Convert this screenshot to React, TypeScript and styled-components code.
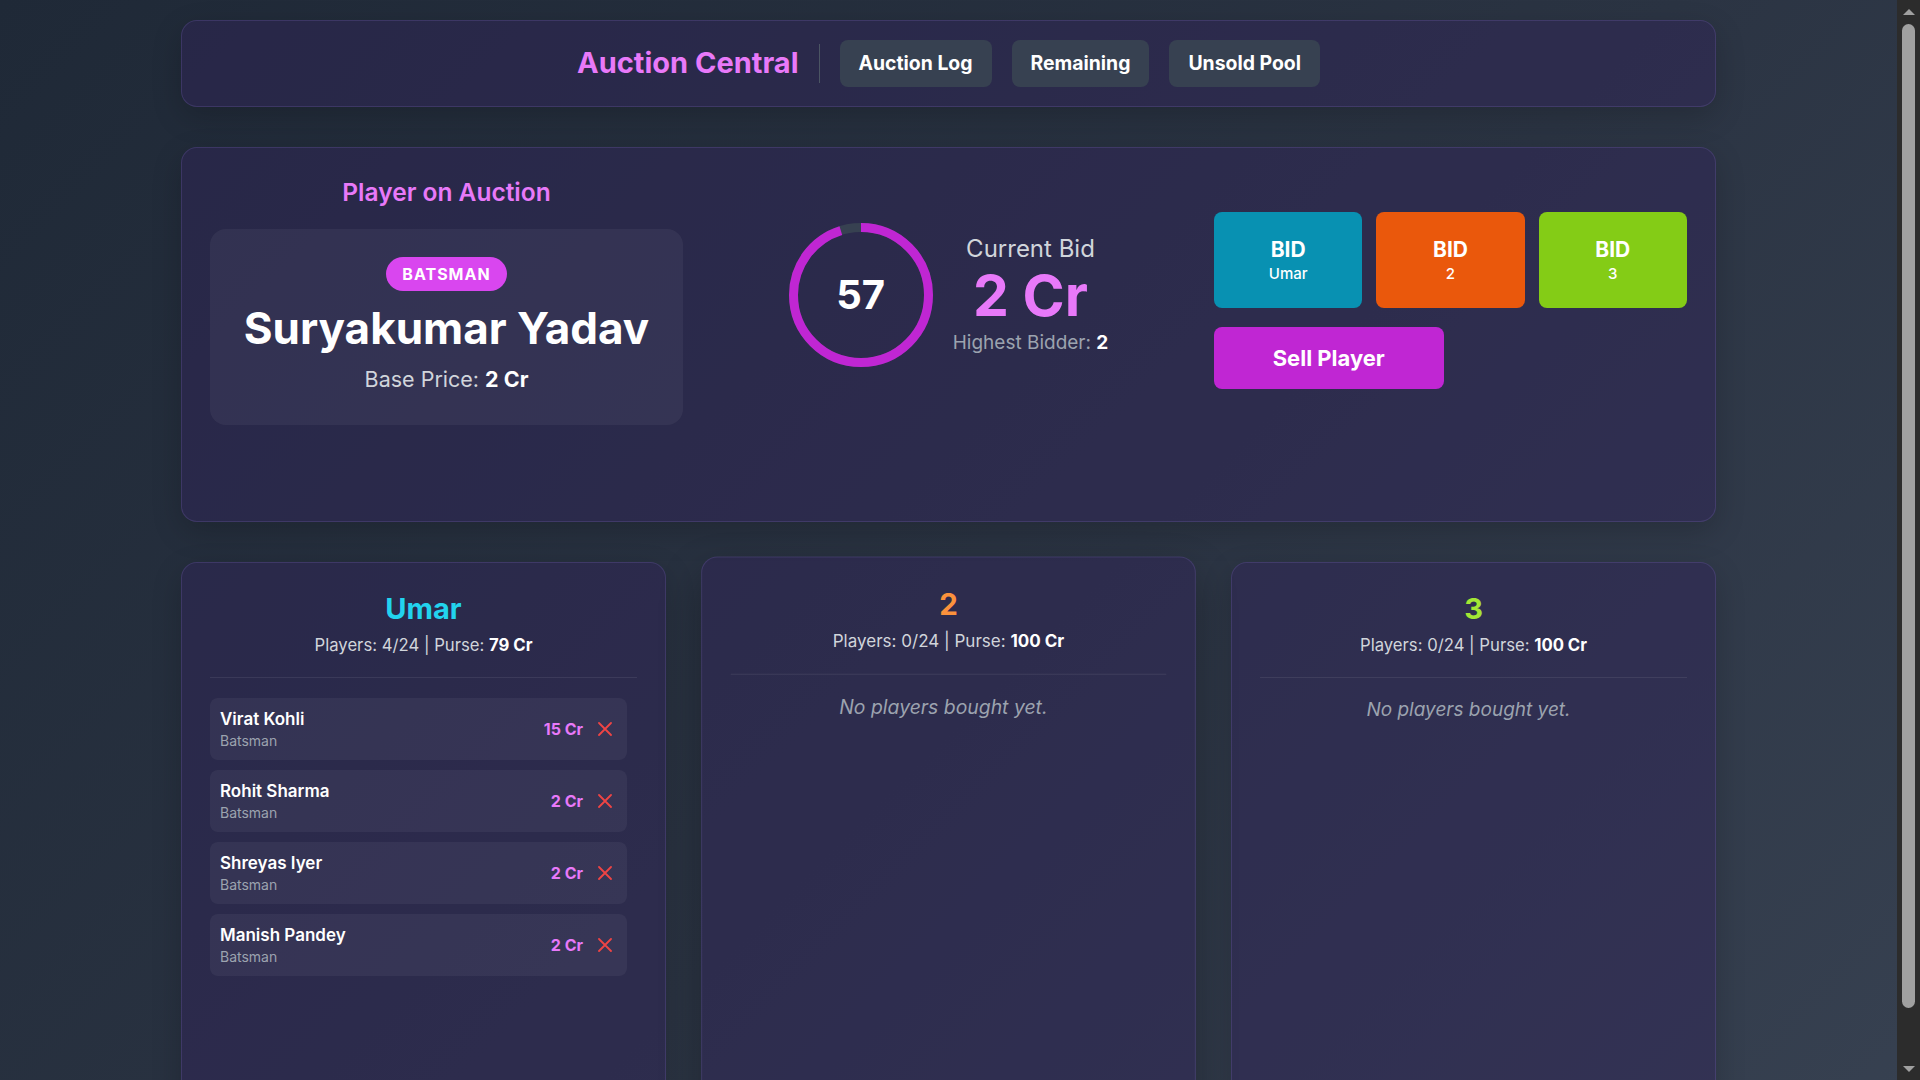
import React from "react";
import styled, { createGlobalStyle } from "styled-components";

const GlobalStyle = createGlobalStyle`
  * { box-sizing: border-box; }
  html { background: #2a3342; }
  body {
    margin: 0;
    min-height: 100vh;
    font-family: Inter, "Noto Sans", "Liberation Sans", sans-serif;
    color: #ffffff;
    background: linear-gradient(135deg, #1f2937 0%, #2b3443 55%, #374151 100%);
  }
`;

const Page = styled.div`
  padding: 19.5px 23px 20px 0;
`;

/* Browser-style scrollbar rail drawn over the right edge of the page */
const ScrollRail = styled.div`
  position: fixed;
  top: 0;
  right: 0;
  width: 23px;
  height: 100vh;
  background: #2c2c2c;
  display: flex;
  flex-direction: column;
  align-items: center;
  z-index: 10;
`;

const RailButton = styled.div`
  height: 23px;
  width: 100%;
  display: flex;
  align-items: center;
  justify-content: center;
  flex: 0 0 auto;
`;

const ArrowUp = styled.span`
  width: 0;
  height: 0;
  border-left: 6px solid transparent;
  border-right: 6px solid transparent;
  border-bottom: 6px solid #a0a0a0;
`;

const ArrowDown = styled.span`
  width: 0;
  height: 0;
  border-left: 6px solid transparent;
  border-right: 6px solid transparent;
  border-top: 6px solid #a0a0a0;
`;

const RailTrack = styled.div`
  flex: 1;
  width: 100%;
  display: flex;
  justify-content: center;
  padding-top: 1px;
`;

const RailThumb = styled.div`
  width: 13px;
  height: 984px;
  border-radius: 7px;
  background: #a0a0a0;
`;

const Container = styled.div`
  max-width: 1535px;
  margin: 0 auto;
  display: flex;
  flex-direction: column;
  gap: 40px;
`;

const Panel = styled.section`
  background: rgba(48, 36, 90, 0.45);
  border: 1px solid rgba(167, 139, 250, 0.16);
  border-radius: 16px;
  box-shadow: 0 10px 30px rgba(0, 0, 0, 0.18);
`;

const HeaderBar = styled(Panel)`
  display: flex;
  align-items: center;
  justify-content: center;
  gap: 20px;
  padding: 19px 24px;
`;

const BrandTitle = styled.h1`
  margin: 0;
  font-size: 29px;
  line-height: 36px;
  font-weight: 700;
  color: #e879f9;
`;

const VDivider = styled.div`
  width: 1px;
  height: 39px;
  background: #4b5563;
`;

const NavButton = styled.button`
  font-family: inherit;
  font-size: 19.4px;
  line-height: 27px;
  font-weight: 700;
  color: #ffffff;
  background: #374151;
  border: none;
  border-radius: 8px;
  padding: 10px 19px;
  cursor: pointer;
`;

const AuctionPanel = styled(Panel)`
  display: grid;
  grid-template-columns: repeat(3, 1fr);
  gap: 29px;
  align-items: center;
  align-content: start;
  padding: 28px;
  min-height: 375px;
`;

const PlayerColumn = styled.div`
  display: flex;
  flex-direction: column;
  align-items: center;
`;

const SectionTitle = styled.h2`
  margin: 0 0 21.5px;
  font-size: 24.5px;
  line-height: 32px;
  font-weight: 600;
  color: #e879f9;
`;

const PlayerCard = styled.div`
  width: 100%;
  display: flex;
  flex-direction: column;
  align-items: center;
  gap: 12px;
  padding: 28px 24px 32px;
  background: rgba(255, 255, 255, 0.05);
  border-radius: 16px;
`;

const RoleBadge = styled.span`
  display: inline-block;
  padding: 5px 16px;
  font-size: 16px;
  line-height: 24px;
  font-weight: 700;
  letter-spacing: 1px;
  color: #ffffff;
  background: #d946ef;
  border-radius: 999px;
`;

const PlayerName = styled.div`
  font-size: 44px;
  line-height: 50px;
  font-weight: 700;
  color: #ffffff;
`;

const BasePrice = styled.div`
  font-size: 21.5px;
  line-height: 28px;
  color: #d1d5db;

  strong {
    color: #ffffff;
    font-weight: 700;
  }
`;

const TimerColumn = styled.div`
  display: flex;
  align-items: center;
  justify-content: center;
  gap: 20px;
  padding-bottom: 10px;
`;

const Ring = styled.div`
  display: grid;
  width: 144px;
  height: 144px;
  place-items: center;

  & > * {
    grid-area: 1 / 1;
  }
`;

const RingNumber = styled.span`
  font-size: 40px;
  line-height: 1;
  font-weight: 700;
  color: #ffffff;
`;

const BidInfo = styled.div`
  display: flex;
  flex-direction: column;
  align-items: center;
`;

const BidLabel = styled.div`
  font-size: 24px;
  line-height: 32px;
  color: #d1d5db;
`;

const BidAmount = styled.div`
  margin-top: 3px;
  font-size: 57px;
  line-height: 56px;
  font-weight: 700;
  color: #e879f9;
`;

const HighestBidder = styled.div`
  margin-top: 5px;
  font-size: 19px;
  line-height: 28px;
  color: #9ca3af;

  strong {
    color: #ffffff;
    font-weight: 700;
  }
`;

const ActionColumn = styled.div`
  display: flex;
  flex-direction: column;
  gap: 19px;
`;

const BidGrid = styled.div`
  display: grid;
  grid-template-columns: repeat(3, 1fr);
  gap: 14px;
`;

const BidButton = styled.button<{ $bg: string }>`
  height: 96px;
  display: flex;
  flex-direction: column;
  align-items: center;
  justify-content: center;
  font-family: inherit;
  color: #ffffff;
  background: ${(p) => p.$bg};
  border: none;
  border-radius: 8px;
  cursor: pointer;
`;

const BidWord = styled.span`
  font-size: 21px;
  line-height: 28px;
  font-weight: 700;
`;

const BidTeam = styled.span`
  font-size: 15px;
  line-height: 20px;
  font-weight: 500;
`;

const SellButton = styled.button`
  width: calc(50% - 7px);
  height: 62px;
  font-family: inherit;
  font-size: 22px;
  line-height: 30px;
  font-weight: 700;
  color: #ffffff;
  background: #c026d3;
  border: none;
  border-radius: 8px;
  cursor: pointer;
`;

const TeamsGrid = styled.div`
  display: grid;
  grid-template-columns: repeat(3, 1fr);
  gap: 40px;
`;

const TeamCard = styled(Panel)<{ $raised?: boolean }>`
  height: 552px;
  padding: 28px;
  display: flex;
  flex-direction: column;
  transform: ${(p) => (p.$raised ? "scale(1.02)" : "none")};
  box-shadow: ${(p) =>
    p.$raised ? "0 18px 40px rgba(0, 0, 0, 0.3)" : "0 10px 30px rgba(0, 0, 0, 0.18)"};
`;

const TeamHeader = styled.div`
  text-align: center;
  padding-bottom: 20px;
  border-bottom: 1px solid rgba(255, 255, 255, 0.08);
`;

const TeamName = styled.h3<{ $color: string }>`
  margin: 0 0 6px;
  font-size: 29px;
  line-height: 36px;
  font-weight: 700;
  color: ${(p) => p.$color};
`;

const TeamStats = styled.div`
  font-size: 16.7px;
  line-height: 24px;
  color: #d1d5db;

  strong {
    color: #ffffff;
    font-weight: 700;
  }
`;

const PlayerList = styled.div`
  margin-top: 20px;
  padding-right: 10px;
  display: flex;
  flex-direction: column;
  gap: 10px;
`;

const PlayerRow = styled.div`
  display: flex;
  align-items: center;
  justify-content: space-between;
  padding: 9px 10px;
  background: rgba(255, 255, 255, 0.05);
  border-radius: 8px;
`;

const RowInfo = styled.div`
  display: flex;
  flex-direction: column;
`;

const RowName = styled.span`
  font-size: 17px;
  line-height: 24px;
  font-weight: 600;
  color: #ffffff;
`;

const RowRole = styled.span`
  font-size: 14px;
  line-height: 20px;
  color: #9ca3af;
`;

const RowRight = styled.div`
  display: flex;
  align-items: center;
  gap: 10px;
`;

const RowPrice = styled.span`
  font-size: 16px;
  line-height: 24px;
  font-weight: 700;
  color: #e879f9;
`;

const RemoveButton = styled.button`
  width: 24px;
  height: 24px;
  display: grid;
  place-items: center;
  padding: 0;
  background: none;
  border: none;
  color: #ef4444;
  cursor: pointer;
`;

const EmptyText = styled.p`
  margin: 0;
  text-align: center;
  font-style: italic;
  font-size: 19px;
  line-height: 24px;
  color: #9ca3af;
`;

type Bought = { name: string; role: string; price: string };
type Team = {
  name: string;
  color: string;
  bidColor: string;
  count: number;
  purse: number;
  players: Bought[];
};

const teams: Team[] = [
  {
    name: "Umar",
    color: "#22d3ee",
    bidColor: "#0891b2",
    count: 4,
    purse: 79,
    players: [
      { name: "Virat Kohli", role: "Batsman", price: "15 Cr" },
      { name: "Rohit Sharma", role: "Batsman", price: "2 Cr" },
      { name: "Shreyas Iyer", role: "Batsman", price: "2 Cr" },
      { name: "Manish Pandey", role: "Batsman", price: "2 Cr" },
    ],
  },
  { name: "2", color: "#fb923c", bidColor: "#ea580c", count: 0, purse: 100, players: [] },
  { name: "3", color: "#a3e635", bidColor: "#84cc16", count: 0, purse: 100, players: [] },
];

const XIcon = () => (
  <svg width="14" height="14" viewBox="0 0 14 14" fill="none">
    <path d="M1 1L13 13M13 1L1 13" stroke="currentColor" strokeWidth="1.8" strokeLinecap="round" />
  </svg>
);

const TimerRing = ({ value, total }: { value: number; total: number }) => {
  const r = 67.5;
  const c = 2 * Math.PI * r;
  const offset = c * (1 - value / total);
  return (
    <Ring>
      <svg width="144" height="144" viewBox="0 0 144 144">
        <circle cx="72" cy="72" r={r} fill="none" stroke="#374151" strokeWidth="9" />
        <circle
          cx="72"
          cy="72"
          r={r}
          fill="none"
          stroke="#c026d3"
          strokeWidth="9"
          strokeDasharray={c}
          strokeDashoffset={offset}
          transform="rotate(-90 72 72)"
        />
      </svg>
      <RingNumber>{value}</RingNumber>
    </Ring>
  );
};

export default function App() {
  return (
    <>
      <GlobalStyle />
      <Page>
        <Container>
          <HeaderBar>
            <BrandTitle>Auction Central</BrandTitle>
            <VDivider />
            <NavButton>Auction Log</NavButton>
            <NavButton>Remaining</NavButton>
            <NavButton>Unsold Pool</NavButton>
          </HeaderBar>

          <AuctionPanel>
            <PlayerColumn>
              <SectionTitle>Player on Auction</SectionTitle>
              <PlayerCard>
                <RoleBadge>BATSMAN</RoleBadge>
                <PlayerName>Suryakumar Yadav</PlayerName>
                <BasePrice>
                  Base Price: <strong>2 Cr</strong>
                </BasePrice>
              </PlayerCard>
            </PlayerColumn>

            <TimerColumn>
              <TimerRing value={57} total={60} />
              <BidInfo>
                <BidLabel>Current Bid</BidLabel>
                <BidAmount>2 Cr</BidAmount>
                <HighestBidder>
                  Highest Bidder: <strong>2</strong>
                </HighestBidder>
              </BidInfo>
            </TimerColumn>

            <ActionColumn>
              <BidGrid>
                {teams.map((t) => (
                  <BidButton key={t.name} $bg={t.bidColor}>
                    <BidWord>BID</BidWord>
                    <BidTeam>{t.name}</BidTeam>
                  </BidButton>
                ))}
              </BidGrid>
              <SellButton>Sell Player</SellButton>
            </ActionColumn>
          </AuctionPanel>

          <TeamsGrid>
            {teams.map((t, i) => (
              <TeamCard key={t.name} $raised={i === 1}>
                <TeamHeader>
                  <TeamName $color={t.color}>{t.name}</TeamName>
                  <TeamStats>
                    Players: {t.count}/24 | Purse: <strong>{t.purse} Cr</strong>
                  </TeamStats>
                </TeamHeader>
                <PlayerList>
                  {t.players.length === 0 ? (
                    <EmptyText>No players bought yet.</EmptyText>
                  ) : (
                    t.players.map((p) => (
                      <PlayerRow key={p.name}>
                        <RowInfo>
                          <RowName>{p.name}</RowName>
                          <RowRole>{p.role}</RowRole>
                        </RowInfo>
                        <RowRight>
                          <RowPrice>{p.price}</RowPrice>
                          <RemoveButton aria-label="Remove">
                            <XIcon />
                          </RemoveButton>
                        </RowRight>
                      </PlayerRow>
                    ))
                  )}
                </PlayerList>
              </TeamCard>
            ))}
          </TeamsGrid>
        </Container>
      </Page>
      <ScrollRail aria-hidden="true">
        <RailButton>
          <ArrowUp />
        </RailButton>
        <RailTrack>
          <RailThumb />
        </RailTrack>
        <RailButton>
          <ArrowDown />
        </RailButton>
      </ScrollRail>
    </>
  );
}
